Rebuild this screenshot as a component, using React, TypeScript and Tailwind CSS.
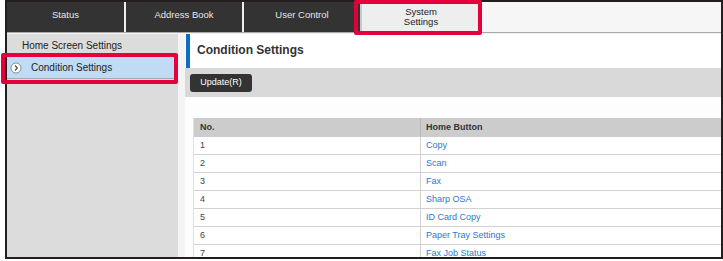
import React from "react";

const rows: [string, string][] = [
  ["1", "Copy"],
  ["2", "Scan"],
  ["3", "Fax"],
  ["4", "Sharp OSA"],
  ["5", "ID Card Copy"],
  ["6", "Paper Tray Settings"],
  ["7", "Fax Job Status"],
];

export default function App() {
  return (
    <div className="relative w-[723px] h-[261px] bg-white overflow-hidden font-['Liberation_Sans',Arial,sans-serif]">
      <div className="ml-[5px] w-[718px] h-[259px] border-2 border-[#231f20] flex flex-col overflow-hidden">
        {/* Tabs */}
        <div className="h-[31px] flex bg-[#f6f6f6] border-b border-[#a8a8a8] shrink-0">
          <div className="w-[117px] bg-[#333333] text-[#e6e6e6] text-[9.5px] flex items-center justify-center pb-[3px]">Status</div>
          <div className="w-[2px] bg-[#eeeeee]" />
          <div className="w-[116px] bg-[#333333] text-[#e6e6e6] text-[9.5px] flex items-center justify-center pb-[3px]">Address Book</div>
          <div className="w-[2px] bg-[#eeeeee]" />
          <div className="w-[116px] bg-[#333333] text-[#e6e6e6] text-[9.5px] flex items-center justify-center pb-[3px]">User Control</div>
          <div className="w-[120px] bg-[#eeeeee] border-l-2 border-[#c8c8c8] border-t border-t-[#a9c8e8] text-[#222] text-[9.5px] leading-[10px] flex flex-col items-center justify-center pb-[2px]">
            <span>System</span>
            <span>Settings</span>
          </div>
          <div className="flex-1" />
        </div>
        {/* Body */}
        <div className="flex-1 flex pt-[1px] bg-[#f2f2f2] min-h-0">
          <div className="w-[171px] bg-[#dcdcdc] flex flex-col shrink-0">
            <div className="h-[23px] flex items-center pl-[15px] text-[10px] text-[#222]">Home Screen Settings</div>
            <div className="h-[22px] bg-[#c0dcf5] border-b border-[#a8a8a8] flex items-center text-[10px] text-[#222]">
              <svg width="12" height="12" viewBox="0 0 12 12" className="ml-[3px] mr-[9px]">
                <circle cx="6" cy="6" r="5" fill="#ffffff" stroke="#8a8a8a" strokeWidth="1" />
                <path d="M5 3.5 L7.3 6 L5 8.5" fill="none" stroke="#555" strokeWidth="1.3" />
              </svg>
              <span>Condition Settings</span>
            </div>
          </div>
          <div className="w-[7px] bg-[#f4f4f4] shrink-0" />
          <div className="flex-1 flex flex-col bg-[#fdfdfd] min-w-0">
            <div className="h-[34px] flex bg-white shrink-0">
              <div className="w-[4px] ml-[1px] bg-[#0a6fc2]" />
              <div className="flex items-center pl-[7px] text-[12px] font-bold text-[#333] pb-[2px]">Condition Settings</div>
            </div>
            <div className="h-[29px] bg-[#d9d9d9] flex items-center pl-[5px] shrink-0">
              <div className="w-[62px] h-[18px] rounded-[3px] bg-[#333333] text-white text-[9px] flex items-center justify-center">Update(R)</div>
            </div>
            <div className="h-[21px] shrink-0" />
            <div className="ml-[8px] flex flex-col border-l border-[#e0e0e0]">
              <div className="h-[19px] bg-[#cccccc] flex text-[9px] font-bold text-[#333] shrink-0">
                <div className="w-[226px] pl-[6px] flex items-center">No.</div>
                <div className="flex-1 border-l border-[#b8b8b8] pl-[5px] flex items-center">Home Button</div>
              </div>
              {rows.map(([n, label]) => (
                <div key={n} className="h-[18px] bg-white flex text-[9px] border-b border-[#d2d2d2] shrink-0">
                  <div className="w-[226px] pl-[6px] flex items-center text-[#444]">{n}</div>
                  <div className="flex-1 border-l border-[#d2d2d2] pl-[5px] flex items-center text-[#2a78d6]">{label}</div>
                </div>
              ))}
            </div>
          </div>
        </div>
      </div>
      {/* Red highlight boxes */}
      <div className="absolute left-[354px] top-0 w-[128px] h-[35px] border-[4px] border-[#e5003c] rounded-[2px]" />
      <div className="absolute left-[1px] top-[53px] w-[177px] h-[31px] border-[4px] border-[#e5003c] rounded-[2px]" />
    </div>
  );
}
